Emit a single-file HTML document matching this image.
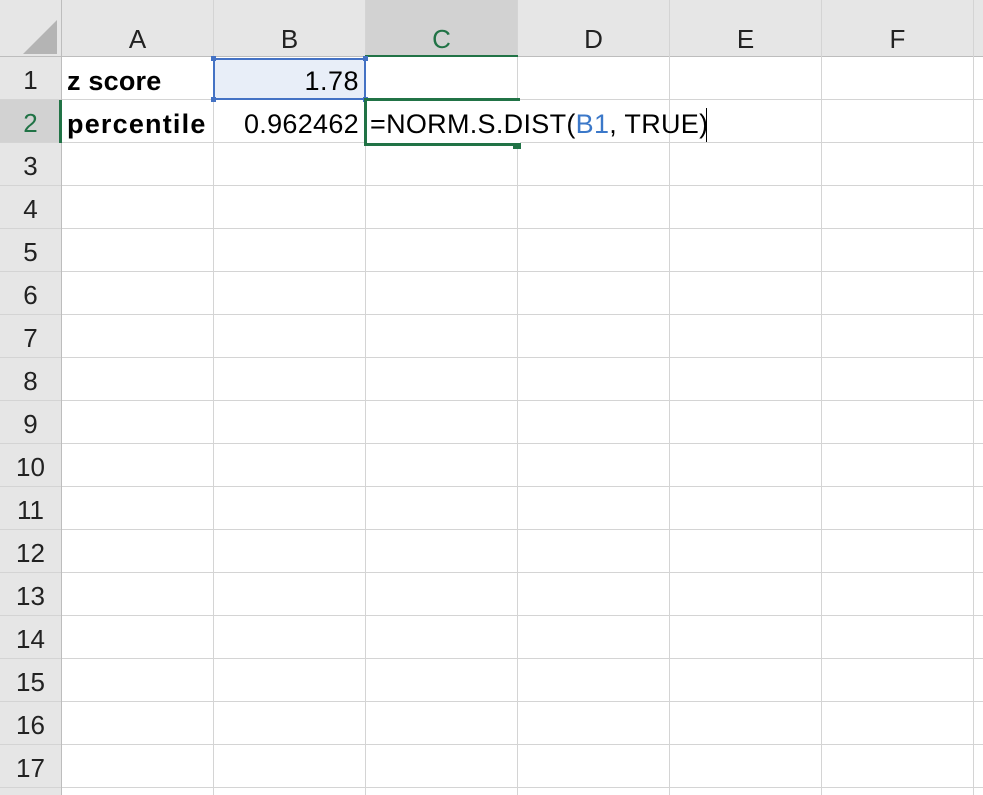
<!DOCTYPE html>
<html><head><meta charset="utf-8"><style>
*{margin:0;padding:0;box-sizing:border-box}
body{width:983px;height:795px;overflow:hidden;background:#fff;position:relative;font-family:"Liberation Sans",Carlito,sans-serif;}
.a{position:absolute}
.hl{position:absolute;left:0;width:983px;height:1px;background:#d4d4d4}
.vl{position:absolute;top:0;width:1px;height:795px;background:#d4d4d4}
.ch{position:absolute;top:0;height:57px;line-height:78px;text-align:center;font-size:26px;color:#222}
.rh{position:absolute;left:0;width:61px;height:43px;line-height:46px;text-align:center;font-size:26px;color:#222}
.t{position:absolute;font-size:27px;line-height:44px;color:#000;white-space:nowrap}
</style></head><body>
<div class="a" style="left:0;top:0;width:983px;height:57px;background:#e6e6e6"></div>
<div class="a" style="left:0;top:0;width:61px;height:795px;background:#e6e6e6"></div>
<div class="a" style="left:365px;top:0;width:152px;height:57px;background:#d2d2d2"></div>
<div class="a" style="left:0;top:100px;width:61px;height:43px;background:#d2d2d2"></div>
<svg class="a" style="left:20px;top:18px" width="40" height="38"><polygon points="37,2 37,36 3,36" fill="#b4b4b4"/></svg>
<div class="hl" style="top:56px;background:#bdbdbd"></div>
<div class="hl" style="top:99px"></div><div class="hl" style="top:142px"></div><div class="hl" style="top:185px"></div>
<div class="hl" style="top:228px"></div><div class="hl" style="top:271px"></div><div class="hl" style="top:314px"></div>
<div class="hl" style="top:357px"></div><div class="hl" style="top:400px"></div><div class="hl" style="top:443px"></div>
<div class="hl" style="top:486px"></div><div class="hl" style="top:529px"></div><div class="hl" style="top:572px"></div>
<div class="hl" style="top:615px"></div><div class="hl" style="top:658px"></div><div class="hl" style="top:701px"></div>
<div class="hl" style="top:744px"></div><div class="hl" style="top:787px"></div>
<div class="vl" style="left:61px;background:#bdbdbd"></div>
<div class="vl" style="left:213px"></div><div class="vl" style="left:365px"></div><div class="vl" style="left:517px"></div>
<div class="vl" style="left:669px"></div><div class="vl" style="left:821px"></div><div class="vl" style="left:973px"></div>
<div class="ch" style="left:62px;width:151px">A</div>
<div class="ch" style="left:214px;width:151px">B</div>
<div class="ch" style="left:366px;width:151px;color:#217346">C</div>
<div class="ch" style="left:518px;width:151px">D</div>
<div class="ch" style="left:670px;width:151px">E</div>
<div class="ch" style="left:822px;width:151px">F</div>
<div class="a" style="left:365px;top:55px;width:153px;height:2px;background:#217346"></div>
<div class="rh" style="top:57px">1</div>
<div class="rh" style="top:100px;color:#217346">2</div>
<div class="rh" style="top:143px">3</div><div class="rh" style="top:186px">4</div><div class="rh" style="top:229px">5</div>
<div class="rh" style="top:272px">6</div><div class="rh" style="top:315px">7</div><div class="rh" style="top:358px">8</div>
<div class="rh" style="top:401px">9</div><div class="rh" style="top:444px">10</div><div class="rh" style="top:487px">11</div>
<div class="rh" style="top:530px">12</div><div class="rh" style="top:573px">13</div><div class="rh" style="top:616px">14</div>
<div class="rh" style="top:659px">15</div><div class="rh" style="top:702px">16</div><div class="rh" style="top:745px">17</div>
<div class="a" style="left:59px;top:100px;width:3px;height:43px;background:#217346"></div>
<div class="a" style="left:213px;top:58px;width:153px;height:42px;background:#e8eef8;border:2px solid #4472c4"></div>
<div class="a" style="left:211px;top:56px;width:5px;height:5px;background:#4472c4"></div>
<div class="a" style="left:211px;top:97px;width:5px;height:5px;background:#4472c4"></div>
<div class="a" style="left:363px;top:56px;width:5px;height:5px;background:#4472c4"></div>
<div class="a" style="left:363px;top:97px;width:5px;height:5px;background:#4472c4"></div>
<div class="a" style="left:364px;top:98px;width:156px;height:48px;border:3px solid #217346;border-right:none;background:#fff"></div>
<div class="a" style="left:513px;top:143px;width:8px;height:6px;background:#217346"></div>
<div class="t" style="left:67px;top:59px;font-weight:bold;letter-spacing:0.2px">z score</div>
<div class="t" style="left:67px;top:102px;font-weight:bold;letter-spacing:1.2px">percentile</div>
<div class="t" style="left:214px;top:59px;width:145px;text-align:right;letter-spacing:0.5px">1.78</div>
<div class="t" style="left:200px;top:102px;width:159px;text-align:right;letter-spacing:0.3px">0.962462</div>
<div class="t" style="left:370px;top:102px;letter-spacing:0.3px">=NORM.S.DIST(<span style="color:#3b78c9">B1</span>, TRUE)</div>
<div class="a" style="left:706px;top:108px;width:1px;height:34px;background:#000"></div>
</body></html>
